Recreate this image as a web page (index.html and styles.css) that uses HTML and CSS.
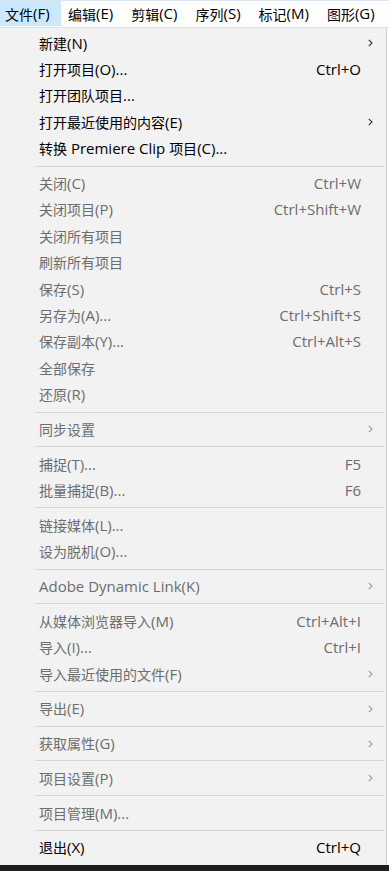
FILE: index.html
```html
<!DOCTYPE html>
<html lang="zh-CN">
<head>
<meta charset="utf-8">
<title>文件菜单</title>
<link rel="stylesheet" href="styles.css">
</head>
<body>
<div class="app">
  <nav class="menubar">
    <span class="top-item active"><span class="zh">文件</span>(F)</span>
    <span class="top-item"><span class="zh">编辑</span>(E)</span>
    <span class="top-item"><span class="zh">剪辑</span>(C)</span>
    <span class="top-item"><span class="zh">序列</span>(S)</span>
    <span class="top-item"><span class="zh">标记</span>(M)</span>
    <span class="top-item"><span class="zh">图形</span>(G)</span>
  </nav>
  <div class="menu">
    <div class="item"><span class="label"><span class="zh">新建</span>(N)</span><span class="key"></span><span class="sub"><svg viewBox="0 0 5 8" width="5" height="8"><path d="M0.8 0.8 L4 4 L0.8 7.2" /></svg></span></div>
    <div class="item"><span class="label"><span class="zh">打开项目</span>(O)...</span><span class="key">Ctrl+O</span><span class="sub"></span></div>
    <div class="item"><span class="label"><span class="zh">打开团队项目</span>...</span><span class="key"></span><span class="sub"></span></div>
    <div class="item"><span class="label"><span class="zh">打开最近使用的内容</span>(E)</span><span class="key"></span><span class="sub"><svg viewBox="0 0 5 8" width="5" height="8"><path d="M0.8 0.8 L4 4 L0.8 7.2" /></svg></span></div>
    <div class="item"><span class="label"><span class="zh">转换</span> Premiere Clip <span class="zh">项目</span>(C)...</span><span class="key"></span><span class="sub"></span></div>
    <div class="sep"></div>
    <div class="item off"><span class="label"><span class="zh">关闭</span>(C)</span><span class="key">Ctrl+W</span><span class="sub"></span></div>
    <div class="item off"><span class="label"><span class="zh">关闭项目</span>(P)</span><span class="key">Ctrl+Shift+W</span><span class="sub"></span></div>
    <div class="item off"><span class="label"><span class="zh">关闭所有项目</span></span><span class="key"></span><span class="sub"></span></div>
    <div class="item off"><span class="label"><span class="zh">刷新所有项目</span></span><span class="key"></span><span class="sub"></span></div>
    <div class="item off"><span class="label"><span class="zh">保存</span>(S)</span><span class="key">Ctrl+S</span><span class="sub"></span></div>
    <div class="item off"><span class="label"><span class="zh">另存为</span>(A)...</span><span class="key">Ctrl+Shift+S</span><span class="sub"></span></div>
    <div class="item off"><span class="label"><span class="zh">保存副本</span>(Y)...</span><span class="key">Ctrl+Alt+S</span><span class="sub"></span></div>
    <div class="item off"><span class="label"><span class="zh">全部保存</span></span><span class="key"></span><span class="sub"></span></div>
    <div class="item off"><span class="label"><span class="zh">还原</span>(R)</span><span class="key"></span><span class="sub"></span></div>
    <div class="sep"></div>
    <div class="item off"><span class="label"><span class="zh">同步设置</span></span><span class="key"></span><span class="sub"><svg viewBox="0 0 5 8" width="5" height="8"><path d="M0.8 0.8 L4 4 L0.8 7.2" /></svg></span></div>
    <div class="sep"></div>
    <div class="item off"><span class="label"><span class="zh">捕捉</span>(T)...</span><span class="key">F5</span><span class="sub"></span></div>
    <div class="item off"><span class="label"><span class="zh">批量捕捉</span>(B)...</span><span class="key">F6</span><span class="sub"></span></div>
    <div class="sep"></div>
    <div class="item off"><span class="label"><span class="zh">链接媒体</span>(L)...</span><span class="key"></span><span class="sub"></span></div>
    <div class="item off"><span class="label"><span class="zh">设为脱机</span>(O)...</span><span class="key"></span><span class="sub"></span></div>
    <div class="sep"></div>
    <div class="item off"><span class="label">Adobe Dynamic Link(K)</span><span class="key"></span><span class="sub"><svg viewBox="0 0 5 8" width="5" height="8"><path d="M0.8 0.8 L4 4 L0.8 7.2" /></svg></span></div>
    <div class="sep"></div>
    <div class="item off"><span class="label"><span class="zh">从媒体浏览器导入</span>(M)</span><span class="key">Ctrl+Alt+I</span><span class="sub"></span></div>
    <div class="item off"><span class="label"><span class="zh">导入</span>(I)...</span><span class="key">Ctrl+I</span><span class="sub"></span></div>
    <div class="item off"><span class="label"><span class="zh">导入最近使用的文件</span>(F)</span><span class="key"></span><span class="sub"><svg viewBox="0 0 5 8" width="5" height="8"><path d="M0.8 0.8 L4 4 L0.8 7.2" /></svg></span></div>
    <div class="sep"></div>
    <div class="item off"><span class="label"><span class="zh">导出</span>(E)</span><span class="key"></span><span class="sub"><svg viewBox="0 0 5 8" width="5" height="8"><path d="M0.8 0.8 L4 4 L0.8 7.2" /></svg></span></div>
    <div class="sep"></div>
    <div class="item off"><span class="label"><span class="zh">获取属性</span>(G)</span><span class="key"></span><span class="sub"><svg viewBox="0 0 5 8" width="5" height="8"><path d="M0.8 0.8 L4 4 L0.8 7.2" /></svg></span></div>
    <div class="sep"></div>
    <div class="item off"><span class="label"><span class="zh">项目设置</span>(P)</span><span class="key"></span><span class="sub"><svg viewBox="0 0 5 8" width="5" height="8"><path d="M0.8 0.8 L4 4 L0.8 7.2" /></svg></span></div>
    <div class="sep"></div>
    <div class="item off"><span class="label"><span class="zh">项目管理</span>(M)...</span><span class="key"></span><span class="sub"></span></div>
    <div class="sep"></div>
    <div class="item"><span class="label"><span class="zh">退出</span>(X)</span><span class="key">Ctrl+Q</span><span class="sub"></span></div>
  </div>
  <div class="footer"></div>
</div>
</body>
</html>
```

FILE: styles.css
```css
* { box-sizing: border-box; }
html, body {
  margin: 0;
  padding: 0;
  background: #ffffff;
}
body {
  font-family: "Open Sans", "Noto Sans CJK SC", sans-serif;
  font-size: 15px;
  color: #000;
}
.zh {
  font-family: "Noto Sans CJK SC", sans-serif;
  font-size: 14px;
}
.app {
  width: 389px;
  height: 871px;
  display: flex;
  flex-direction: column;
  overflow: hidden;
}
.menubar {
  height: 28px;
  flex: none;
  display: flex;
  align-items: stretch;
  background: #ffffff;
  border-top: 1px solid #dbe6f2;
  border-bottom: 1px solid #e3e3e3;
  padding-bottom: 1px;
}
.top-item {
  display: flex;
  align-items: center;
  padding: 0 8px 0 8px;
  white-space: nowrap;
  line-height: 1;
  border: 1px solid transparent;
}
.top-item.active {
  background: #cce8ff;
  border-color: #cce8ff;
  padding: 0 0 0 4px;
  width: 61px;
}
.top-item.active + .top-item { padding-left: 6px; }
.menu {
  flex: 1;
  width: 387px;
  background: #f2f2f2;
  border-right: 1px solid #cfcfcf;
  padding-top: 2px;
  display: flex;
  flex-direction: column;
}
.item {
  height: 26.4px;
  display: flex;
  align-items: center;
  padding-left: 39px;
  white-space: nowrap;
  color: #000;
  line-height: 1;
}
.item.off { color: #6d6d6d; }
.label { flex: 1; }
.key { text-align: right; }
.sub {
  width: 25px;
  flex: none;
  display: flex;
  align-items: center;
  padding-left: 7px;
}
.sub svg { display: block; }
.sub path {
  fill: none;
  stroke: #333;
  stroke-width: 1.1;
}
.item.off .sub path { stroke: #9a9a9a; }
.sep {
  height: 1px;
  margin: 3.7px 2px 3.7px 35px;
  background: #d7d7d7;
  flex: none;
}
.footer {
  height: 6px;
  flex: none;
  background: #1e1e1e;
}
```
